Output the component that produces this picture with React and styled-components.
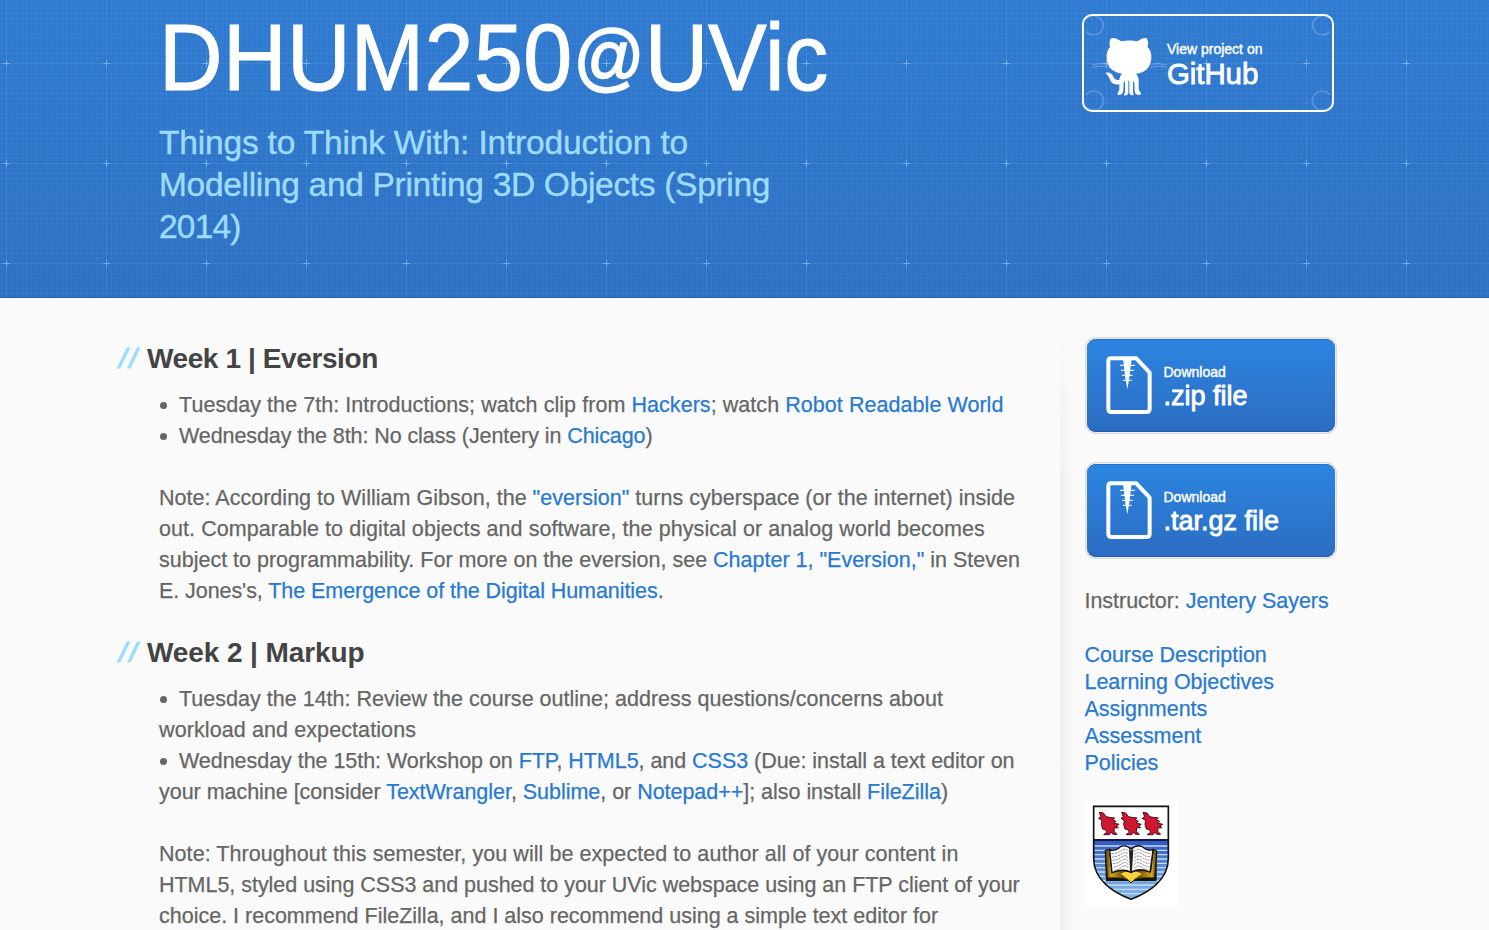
import React from 'react';
import styled, { createGlobalStyle } from 'styled-components';

const Global = createGlobalStyle`
  * { box-sizing: border-box; }
  html, body { margin: 0; height: 930px; overflow: hidden; background: #fafafa; }
  body { font-family: "Liberation Sans", Arial, sans-serif; color: #666; }
  a { color: #2879d0; text-decoration: none; }
`;

const Page = styled.div`
  height: 930px;
  overflow: hidden;
`;

const Header = styled.header`
  position: relative;
  height: 298px;
  padding-left: 159px;
  display: flex;
  align-items: flex-start;
  background: linear-gradient(#307cd2, #2e72c4);
  border-bottom: 1px solid #2060ad;
`;

const Blueprint = styled.svg`
  position: absolute;
  inset: 0;
  width: 100%;
  height: 100%;
`;

const Titles = styled.div`
  position: relative;
  width: 923px;
`;

const Title = styled.h1`
  display: flex;
  margin: 0;
  height: 122px;
  padding-top: 11px;
  font-size: 88px;
  font-weight: 400;
  line-height: 98px;
  color: #fff;
  white-space: nowrap;
  letter-spacing: 0.4px;
  -webkit-text-stroke: 1px #fff;
  transform: scaleY(1.065);
  transform-origin: 0 89px;
`;

const At = styled.span`
  padding-left: 1px;
  font-size: 70px;
  line-height: 94px;
  letter-spacing: 0;
  -webkit-text-stroke: 1.6px #fff;
`;

const Uni = styled.span`
  letter-spacing: -0.2px;
`;

const Tagline = styled.h2`
  margin: 0;
  font-size: 33.5px;
  font-weight: 400;
  line-height: 42px;
  color: #9ddcff;
  -webkit-text-stroke: 0.4px #9ddcff;
`;

const Line = styled.span`
  display: block;
  white-space: nowrap;
  letter-spacing: ${(p) => p.$ls || 0}px;
`;

const Badge = styled.a`
  position: relative;
  width: 252px;
  height: 98px;
  margin-top: 14px;
  padding: 25px 0 0 83px;
  border: 2.5px solid #fff;
  border-radius: 10px;
  display: flex;
  flex-direction: column;
  && { color: #fff; }
`;

const BadgeArt = styled.svg`
  position: absolute;
  left: -2px;
  top: -2px;
  width: 252px;
  height: 98px;
`;

const Small = styled.span`
  font-size: 14px;
  line-height: 16px;
  -webkit-text-stroke: 0.4px #fff;
`;

const Big = styled.span`
  font-size: ${(p) => p.$size}px;
  line-height: ${(p) => p.$lh || 32}px;
  letter-spacing: ${(p) => p.$ls || 0}px;
  -webkit-text-stroke: 0.8px #fff;
`;

const Body = styled.div`
  display: flex;
  height: 632px;
  padding-left: 159px;
`;

const Main = styled.main`
  width: 901px;
  padding-top: 45px;
`;

const Week = styled.section`
  height: 294px;
`;

const WeekTitle = styled.h3`
  display: flex;
  margin: 0 0 16px -41px;
  font-size: 28px;
  line-height: 31px;
  color: #444;
  height: 31px;
  white-space: pre;
`;

const Slashes = styled.span`
  width: 29px;
  padding-left: 1px;
  font-style: italic;
  font-weight: 400;
  letter-spacing: 2.4px;
  color: #9ddcff;
  -webkit-text-stroke: 1.2px #9ddcff;
`;

const Text = styled.div`
  font-size: 21.5px;
  line-height: 31px;
  margin-bottom: 31px;
  -webkit-text-stroke-width: 0.25px;
`;

const Dot = styled.span`
  display: inline-block;
  width: 7px;
  height: 7px;
  margin: 0 12px 3px 1px;
  border-radius: 50%;
  background: #666;
`;

const Aside = styled.aside`
  width: 429px;
  padding: 41px 0 0 24.5px;
  position: relative;
  &::before {
    content: '';
    position: absolute;
    left: 0;
    top: 30px;
    bottom: 0;
    width: 14px;
    background: linear-gradient(to right, #f0f0f0, #fafafa);
    mask-image: linear-gradient(transparent, #000 150px);
  }
`;

const Download = styled.a`
  display: flex;
  width: 248px;
  height: 93px;
  margin: 0 0 32px 2.5px;
  border-radius: 9px;
  background: linear-gradient(#2b85e0, #2c6cc2);
  box-shadow: inset 0 1px 0 #1e70ce, inset 0 -1px 0 #1f5fb6, 0 0 0 1px #eeebe6, 0 0 0 2px #d9d9d8;
  && { color: #fff; }
`;

const FileIcon = styled.svg`
  width: 46px;
  height: 58px;
  margin: 17px 12px 0 18.5px;
  flex: none;
`;

const Label = styled.span`
  display: flex;
  flex-direction: column;
  padding-top: 25px;
`;

const Links = styled.div`
  margin-top: -1px;
`;

const Info = styled.div`
  font-size: 21.5px;
  line-height: 27px;
  margin-bottom: 27px;
  letter-spacing: -0.03px;
  -webkit-text-stroke-width: 0.25px;
`;

const Crest = styled.svg`
  display: block;
  width: 93px;
  height: 106px;
  margin: -3px 0 0;
`;

function Grid() {
  return (
    <Blueprint>
      <defs>
        <pattern id="fine" x="6" y="63" width="10" height="10" patternUnits="userSpaceOnUse">
          <path d="M0 .5H10M.5 0V10" stroke="#fff" strokeOpacity=".03" />
          <path d="M0 3.5H10M3.5 0V10" stroke="#0d4fa8" strokeOpacity=".04" />
          <path d="M0 5.5H10M5.5 0V10" stroke="#fff" strokeOpacity=".02" />
          <path d="M0 8.5H10M8.5 0V10" stroke="#0d4fa8" strokeOpacity=".04" />
        </pattern>
        <pattern id="major" x="-44" y="13" width="100" height="100" patternUnits="userSpaceOnUse">
          <path d="M0 50.5H100M50.5 0V100" stroke="#8fc4ff" strokeOpacity=".08" />
          <path d="M47 50.5H54M50.5 47V54" stroke="#b5dbff" strokeOpacity=".45" />
        </pattern>
      </defs>
      <rect width="100%" height="100%" fill="url(#fine)" />
      <rect width="100%" height="100%" fill="url(#major)" />
    </Blueprint>
  );
}

function Octocat() {
  return (
    <BadgeArt viewBox="36 42 756 294">
      <g fill="none" stroke="#fff" strokeOpacity=".2" strokeWidth="5">
        <path d="M49 57A29 29 0 1 1 49 95M779 57A29 29 0 1 0 779 95" />
        <path d="M49 320A29 29 0 1 0 49 284M779 320A29 29 0 1 1 779 284" />
      </g>
      <g fill="none" stroke="#fff" strokeOpacity=".3" strokeWidth="3">
        <path d="M66 202Q88 194 116 202M68 194Q90 188 114 193M290 202Q266 194 242 202M290 195Q266 188 242 193" />
      </g>
      <path
        fill="#fff"
        d="M122 116C130 111 144 117 153 124C168 121 188 121 202 124C211 117 224 111 230 115C235 123 235 133 233 141C241 149 245 160 244 174C242 205 225 218 198 221C204 227 206 234 206 242V266C206 273 213 276 213 281C211 287 200 286 196 280C193 275 194 264 193 250C192 242 189 242 189 250V272C189 279 191 281 191 284C188 288 180 286 178 280V242H175V280C172 287 165 288 162 285C162 281 165 280 165 273V250C165 242 162 242 161 250C160 264 161 276 157 280C153 286 144 287 142 282C142 277 148 274 148 266V253C138 255 126 252 122 243C118 233 115 226 106 219C117 214 126 221 130 230C134 238 141 242 148 239C149 231 151 226 156 221C130 217 112 205 110 174C109 160 113 150 120 141C118 132 118 124 122 116Z"
      />
    </BadgeArt>
  );
}

function Zip() {
  return (
    <FileIcon viewBox="167 94 138 174">
      <path
        d="M182 101H258L298 144V252Q298 262 288 262H184Q174 262 174 252V109Q174 101 182 101Z"
        fill="none"
        stroke="#fff"
        strokeWidth="12"
        strokeLinejoin="round"
      />
      <path d="M218 101H244L237 160L231 194L225 160Z" fill="#fff" />
      <path d="M209 122H254M212 137H251M215 152H247M218 167H244" stroke="#fff" strokeOpacity=".85" strokeWidth="4" />
    </FileIcon>
  );
}

const bird =
  'M78 67L90 69L98 80L108 82L124 84L118 89L128 94L121 99L137 103L128 108L135 113L122 114L123 125L131 133L119 133L114 126L108 134H91L101 127L98 120L88 117L84 103L86 92L76 85L83 80Z';

function Shield() {
  const stripes = [168, 181, 194, 207, 220, 233, 246, 259, 272, 285, 298, 311];
  return (
    <Crest viewBox="31 33 279 318">
      <defs>
        <clipPath id="shield">
          <path d="M57 49H281V205C281 270 222 308 169 328C116 308 57 270 57 205Z" />
        </clipPath>
        <linearGradient id="gold">
          <stop offset="0" stopColor="#3a2a08" />
          <stop offset=".12" stopColor="#d7a51d" />
          <stop offset=".35" stopColor="#6b4c0c" />
          <stop offset=".5" stopColor="#f3cf38" />
          <stop offset=".65" stopColor="#6b4c0c" />
          <stop offset=".9" stopColor="#d9a91f" />
          <stop offset="1" stopColor="#3a2a08" />
        </linearGradient>
        <linearGradient id="sea" x2="0" y2="1">
          <stop offset="0" stopColor="#2f55c4" />
          <stop offset=".6" stopColor="#6a9bdc" />
          <stop offset="1" stopColor="#86b8e6" />
        </linearGradient>
      </defs>
      <rect x="31" y="33" width="279" height="318" fill="#fff" />
      <g clipPath="url(#shield)">
        <rect x="55" y="150" width="230" height="180" fill="url(#sea)" />
        {stripes.map((y) => (
          <path key={y} d={`M55 ${y}H285`} stroke="#c3dcf4" strokeWidth="4" />
        ))}
        <path d="M55 150H285" stroke="#111a3c" strokeWidth="6" />
      </g>
      <g fill="#cf1830" stroke="#4c0a18" strokeWidth="3">
        <path d={bird} transform="translate(-4 0)" />
        <path d={bird} transform="translate(63 0)" />
        <path d={bird} transform="translate(127 0)" />
      </g>
      <path d="M91 180L108 176V262H93ZM232 176L246 180V272H232ZM94 252H244V273H94Z" fill="#111" />
      <path d="M91 182L104 178L112 246Q145 236 169 248Q195 236 228 246L236 178L247 184L240 264Q205 262 182 268L169 278L156 268Q132 262 98 264Z" fill="url(#gold)" stroke="#1b1608" strokeWidth="3" />
      <path d="M138 252Q156 240 169 250Q184 240 202 252L182 264L169 276L156 264Z" fill="#f7d23c" />
      <path d="M105 180Q123 184 137 170Q155 163 169 178Q186 162 203 170Q216 182 235 180L226 246Q190 232 169 247Q148 234 112 248Z" fill="#fff" stroke="#111" strokeWidth="4" />
      <path d="M163 176L169 182L176 176L172 246H166Z" fill="#222" />
      <g fill="none" stroke="#555" strokeWidth="2" strokeDasharray="7 2">
        {[0, 10, 20, 30, 40, 50].map((d) => (
          <path key={d} d={`M${111 + d / 8} ${191 + d}Q130 ${190 + d} 142 ${181 + d}T160 ${184 + d}M179 ${184 + d}Q190 ${173 + d} 202 ${182 + d}T${228 - d / 8} ${190 + d}`} />
        ))}
      </g>
      <path d="M57 49H281V205C281 270 222 308 169 328C116 308 57 270 57 205Z" fill="none" stroke="#111" strokeWidth="5" />
    </Crest>
  );
}

export default function App() {
  return (
    <Page>
      <Global />
      <Header>
        <Grid />
        <Titles>
          <Title>DHUM250<At>@</At><Uni>UVic</Uni></Title>
          <Tagline>
            <Line $ls={-0.18}>Things to Think With: Introduction to</Line>
            <Line $ls={-0.31}>Modelling and Printing 3D Objects (Spring</Line>
            <Line $ls={-0.8}>2014)</Line>
          </Tagline>
        </Titles>
        <Badge href="#">
          <Octocat />
          <Small>View project on</Small>
          <Big $size={29.5} $lh={34} $ls={-0.1}>GitHub</Big>
        </Badge>
      </Header>
      <Body>
        <Main>
          <Week>
            <WeekTitle><Slashes>//</Slashes><Line $ls={-0.4}>Week 1 | Eversion</Line></WeekTitle>
            <Text>
              <Line $ls={0.056}><Dot />Tuesday the 7th: Introductions; watch clip from <a href="#">Hackers</a>; watch <a href="#">Robot Readable World</a></Line>
              <Line $ls={-0.085}><Dot />Wednesday the 8th: No class (Jentery in <a href="#">Chicago</a>)</Line>
            </Text>
            <Text>
              <Line $ls={0.02}>Note: According to William Gibson, the <a href="#">"eversion"</a> turns cyberspace (or the internet) inside</Line>
              <Line $ls={0.07}>out. Comparable to digital objects and software, the physical or analog world becomes</Line>
              <Line $ls={0}>subject to programmability. For more on the eversion, see <a href="#">Chapter 1, "Eversion,"</a> in Steven</Line>
              <Line $ls={-0.067}>E. Jones's, <a href="#">The Emergence of the Digital Humanities</a>.</Line>
            </Text>
          </Week>
          <Week>
            <WeekTitle><Slashes>//</Slashes><Line $ls={-0.1}>Week 2 | Markup</Line></WeekTitle>
            <Text>
              <Line $ls={0.013}><Dot />Tuesday the 14th: Review the course outline; address questions/concerns about</Line>
              <Line $ls={0.1}>workload and expectations</Line>
              <Line $ls={-0.042}><Dot />Wednesday the 15th: Workshop on <a href="#">FTP</a>, <a href="#">HTML5</a>, and <a href="#">CSS3</a> (Due: install a text editor on</Line>
              <Line $ls={-0.03}>your machine [consider <a href="#">TextWrangler</a>, <a href="#">Sublime</a>, or <a href="#">Notepad++</a>]; also install <a href="#">FileZilla</a>)</Line>
            </Text>
            <Text>
              <Line $ls={0.06}>Note: Throughout this semester, you will be expected to author all of your content in</Line>
              <Line $ls={-0.03}>HTML5, styled using CSS3 and pushed to your UVic webspace using an FTP client of your</Line>
              <Line $ls={0}>choice. I recommend FileZilla, and I also recommend using a simple text editor for</Line>
            </Text>
          </Week>
        </Main>
        <Aside>
          <Download href="#">
            <Zip />
            <Label><Small>Download</Small><Big $size={27}>.zip file</Big></Label>
          </Download>
          <Download href="#">
            <Zip />
            <Label><Small>Download</Small><Big $size={27}>.tar.gz file</Big></Label>
          </Download>
          <Links>
            <Info>Instructor: <a href="#">Jentery Sayers</a></Info>
            <Info>
              <a href="#">Course Description</a><br />
              <a href="#">Learning Objectives</a><br />
              <a href="#">Assignments</a><br />
              <a href="#">Assessment</a><br />
              <a href="#">Policies</a>
            </Info>
          </Links>
          <Shield />
        </Aside>
      </Body>
    </Page>
  );
}
